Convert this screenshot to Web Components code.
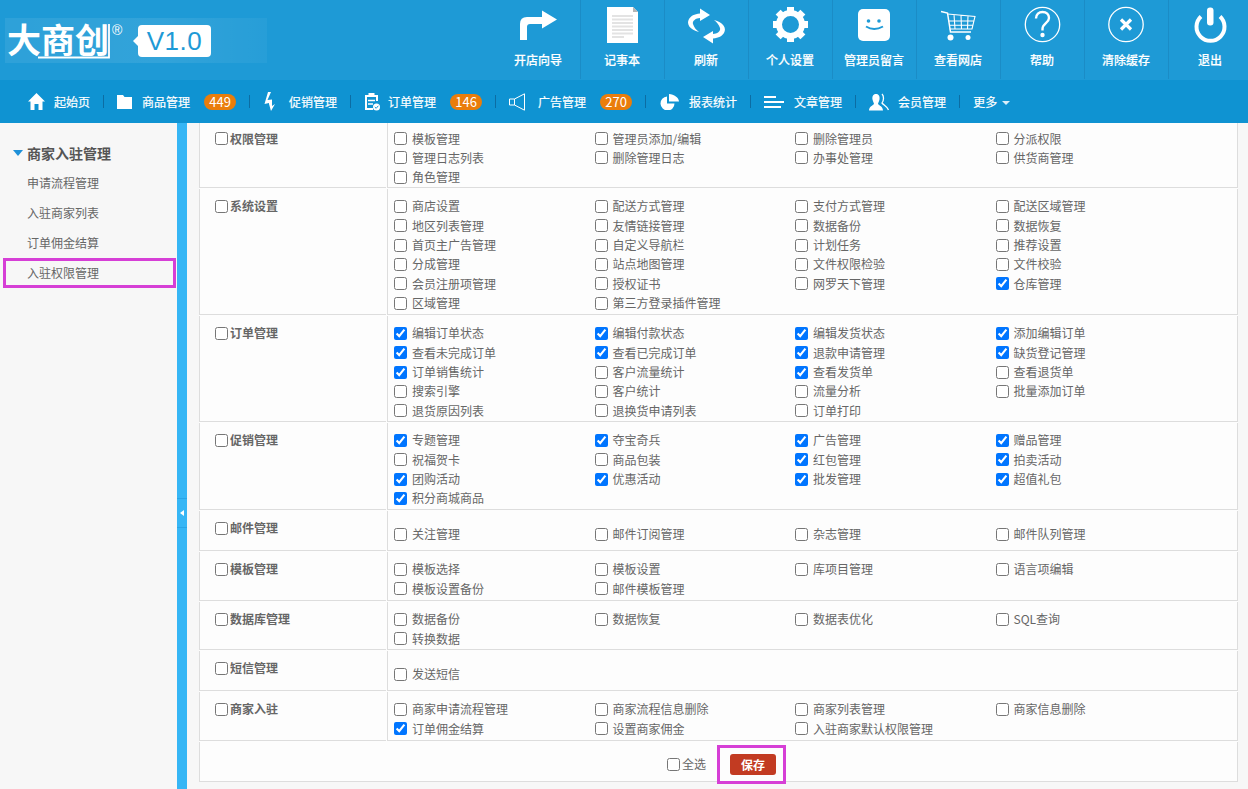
<!DOCTYPE html>
<html lang="zh-CN"><head><meta charset="utf-8"><title>入驻权限管理</title>
<style>
html,body{margin:0;padding:0;height:100%;overflow:hidden}
body{font-family:"Noto Sans CJK SC","Liberation Sans",sans-serif;font-size:12px;color:#666;background:#f7f7f7}
</style></head><body>
<app-page>
  <app-header>
    <brand-logo></brand-logo>
    <tool-btn label="开店向导"><svg width="84" height="50" viewBox="496 0 84 50"><path fill="#fff" d="M520 40V24Q520 17 527 17H542V10.5L557 19.5 542 28.5V24H530Q527 24 527 27V40Z"/></svg></tool-btn>
    <tool-btn label="记事本"><svg width="84" height="50" viewBox="580 0 84 50"><path fill="#fff" d="M607 7H633L638 12V43H607Z"/><path fill="#b5b5b5" d="M633 7L638 12H633Z"/><path stroke="#e3e3e3" stroke-width="2" d="M612 16H633M612 19.5H633M612 23H633M612 26.5H633M612 30H633M612 33.5H633M612 37H624"/></svg></tool-btn>
    <tool-btn label="刷新"><svg width="84" height="50" viewBox="664 0 84 50"><g fill="#fff"><path id="a" d="M699 32C690 30 686 24 689 19 691 16 694 14 700 13.5V8.5L710 15 700 21V18C696 18 692 21 693 24 694 27 696 30 699 32Z"/><path transform="rotate(180 706.5 26)" d="M699 32C690 30 686 24 689 19 691 16 694 14 700 13.5V8.5L710 15 700 21V18C696 18 692 21 693 24 694 27 696 30 699 32Z"/></g></svg></tool-btn>
    <tool-btn label="个人设置"><svg width="84" height="50" viewBox="748 0 84 50"><g fill="#fff"><g id="t"><rect x="787" y="7" width="7" height="35"/><rect x="787" y="7" width="7" height="35" transform="rotate(45 790.5 24.5)"/><rect x="787" y="7" width="7" height="35" transform="rotate(90 790.5 24.5)"/><rect x="787" y="7" width="7" height="35" transform="rotate(135 790.5 24.5)"/></g></g><circle cx="790.5" cy="24.5" r="11.5" fill="#1e9ad6" stroke="#fff" stroke-width="6"/></svg></tool-btn>
    <tool-btn label="管理员留言"><svg width="84" height="50" viewBox="832 0 84 50"><rect x="858" y="9" width="32" height="32" rx="5" fill="#fff"/><circle cx="868.5" cy="21" r="1.8" fill="#1e9ad6"/><circle cx="879" cy="21" r="1.8" fill="#1e9ad6"/><path d="M866 26.5Q874 31.5 883 26.5" fill="none" stroke="#1e9ad6" stroke-width="2"/></svg></tool-btn>
    <tool-btn label="查看网店"><svg width="84" height="50" viewBox="916 0 84 50"><g fill="none" stroke="#fff"><path stroke-width="1.5" d="M941 11.5L947.5 13 950.5 32H971"/><path stroke-width="1.1" d="M947.5 14L975 16.5 972 29 949.5 29M948.8 21H974M950 25.3H973M954 14.5L955 29M961 15L961.5 29M968 15.7L967.5 29"/></g><circle cx="950.5" cy="37.5" r="3" fill="#fff"/><circle cx="968" cy="37.5" r="2.5" fill="#fff"/></svg></tool-btn>
    <tool-btn label="帮助"><svg width="84" height="50" viewBox="1000 0 84 50"><circle cx="1042.5" cy="24.5" r="17.2" fill="none" stroke="#fff" stroke-width="1.3"/><path d="M1036 18.5C1036 14 1039 12 1042.5 12 1046.5 12 1049 14.5 1049 18 1049 23 1042.500 23.500 1042.500 29V30.500" fill="none" stroke="#fff" stroke-width="2.400"/><circle cx="1042.500" cy="35" r="2.200" fill="#fff"/></svg></tool-btn>
    <tool-btn label="清除缓存"><svg width="84" height="50" viewBox="1084 0 84 50"><circle cx="1126" cy="24.500" r="17.200" fill="none" stroke="#fff" stroke-width="1.300"/><path d="M1121 19.500L1131 29.500M1131 19.500L1121 29.500" stroke="#fff" stroke-width="3.200"/></svg></tool-btn>
    <tool-btn label="退出"><svg width="84" height="50" viewBox="1168 0 84 50"><path d="M1201 16.500A14 14 0 1 0 1220 16.500" fill="none" stroke="#fff" stroke-width="4"/><rect x="1207" y="7.500" width="6.500" height="18" rx="3" fill="#fff"/></svg></tool-btn>
  </app-header>
  <main-nav>
    <nav-item w="17" g="9" sep><svg slot="icon" width="17" height="17" viewBox="0 0 17 17"><path fill="#fff" d="M8.500 0L17 8.500H14.500V17H10.500V11H6.500V17H2.500V8.500H0Z"/></svg>起始页</nav-item>
    <nav-item w="15" g="10" badge="449" sep><svg slot="icon" width="15" height="14" viewBox="0 0 15 14"><path fill="#fff" d="M0 0H6L7.500 2H15V14H0Z"/></svg>商品管理</nav-item>
    <nav-item w="16" g="10" sep><svg slot="icon" width="14" height="19" viewBox="0 0 14 19"><path fill="#fff" d="M5 0H8L4.500 8 9 7.500 9 14 12 12 8 19 6 12V11L1.500 12Z"/></svg>促销管理</nav-item>
    <nav-item w="16" g="8" badge="146" sep><svg slot="icon" width="16" height="19" viewBox="0 0 16 19"><path fill="none" stroke="#fff" stroke-width="2" d="M9 17H2V4H13V9"/><rect x="4.500" y="1" width="6" height="4" fill="#fff"/><path stroke="#fff" stroke-width="1.500" d="M4 8.500H11M4 12H9"/><circle cx="12.500" cy="15" r="3.500" fill="#fff"/><path d="M10.800 15L12.200 16.300 14.300 13.800" fill="none" stroke="#0f93d2" stroke-width="1"/></svg>订单管理</nav-item>
    <nav-item w="17" g="12" badge="270" sep><svg slot="icon" width="17" height="18" viewBox="0 0 17 18"><path fill="none" stroke="#fff" stroke-width="1" d="M.5 6H5.500L15.500 .8V17.200L5.500 12H.5ZM5.500 6V12"/></svg>广告管理</nav-item>
    <nav-item w="20" g="10" sep><svg slot="icon" width="20" height="16" viewBox="0 0 20 16"><path fill="#fff" d="M8 2.500A7 7 0 1 0 15.500 9.500H8Z M10 0L10 7.500H20C20 4 15 0 10 0Z" /></svg>报表统计</nav-item>
    <nav-item w="20" g="10" sep><svg slot="icon" width="20" height="12" viewBox="0 0 20 12"><path stroke="#fff" stroke-width="2" d="M0 1H12M0 6H20M0 11H17"/></svg>文章管理</nav-item>
    <nav-item w="20" g="9" sep><svg slot="icon" width="20" height="18" viewBox="0 0 20 18"><path fill="#fff" d="M7 1C10 1 11 3.500 10.500 6.500 10 9 9 10 9 11 10 12.500 14 13.500 14 17.500H0C0 13.500 4 12.500 5 11 5 10 4 9 3.500 6.500 3 3.500 4 1 7 1Z"/><path fill="none" stroke="#fff" stroke-width="1.300" d="M13 1C15 3 15 7 13 10 14.500 12 18 13 19.500 17"/></svg>会员管理</nav-item>
    <nav-item w="0" g="0" caret>更多</nav-item>
  </main-nav>
  <app-body>
    <side-menu>
      <side-group>商家入驻管理</side-group>
      <side-item>申请流程管理</side-item>
      <side-item>入驻商家列表</side-item>
      <side-item>订单佣金结算</side-item>
      <side-item active>入驻权限管理</side-item>
    </side-menu>
    <split-bar></split-bar>
    <perm-table>
      <perm-row name="权限管理" h="65" pt="5.500" tpt="5.500"><perm-item>模板管理</perm-item><perm-item>管理员添加/编辑</perm-item><perm-item>删除管理员</perm-item><perm-item>分派权限</perm-item><perm-item>管理日志列表</perm-item><perm-item>删除管理日志</perm-item><perm-item>办事处管理</perm-item><perm-item>供货商管理</perm-item><perm-item>角色管理</perm-item></perm-row>
      <perm-row name="系统设置" h="126"><perm-item>商店设置</perm-item><perm-item>配送方式管理</perm-item><perm-item>支付方式管理</perm-item><perm-item>配送区域管理</perm-item><perm-item>地区列表管理</perm-item><perm-item>友情链接管理</perm-item><perm-item>数据备份</perm-item><perm-item>数据恢复</perm-item><perm-item>首页主广告管理</perm-item><perm-item>自定义导航栏</perm-item><perm-item>计划任务</perm-item><perm-item>推荐设置</perm-item><perm-item>分成管理</perm-item><perm-item>站点地图管理</perm-item><perm-item>文件权限检验</perm-item><perm-item>文件校验</perm-item><perm-item>会员注册项管理</perm-item><perm-item>授权证书</perm-item><perm-item>网罗天下管理</perm-item><perm-item checked>仓库管理</perm-item><perm-item>区域管理</perm-item><perm-item>第三方登录插件管理</perm-item></perm-row>
      <perm-row name="订单管理" h="106"><perm-item checked>编辑订单状态</perm-item><perm-item checked>编辑付款状态</perm-item><perm-item checked>编辑发货状态</perm-item><perm-item checked>添加编辑订单</perm-item><perm-item checked>查看未完成订单</perm-item><perm-item checked>查看已完成订单</perm-item><perm-item checked>退款申请管理</perm-item><perm-item checked>缺货登记管理</perm-item><perm-item checked>订单销售统计</perm-item><perm-item>客户流量统计</perm-item><perm-item checked>查看发货单</perm-item><perm-item>查看退货单</perm-item><perm-item>搜索引擎</perm-item><perm-item>客户统计</perm-item><perm-item>流量分析</perm-item><perm-item>批量添加订单</perm-item><perm-item>退货原因列表</perm-item><perm-item>退换货申请列表</perm-item><perm-item>订单打印</perm-item></perm-row>
      <perm-row name="促销管理" h="87"><perm-item checked>专题管理</perm-item><perm-item checked>夺宝奇兵</perm-item><perm-item checked>广告管理</perm-item><perm-item checked>赠品管理</perm-item><perm-item>祝福贺卡</perm-item><perm-item>商品包装</perm-item><perm-item checked>红包管理</perm-item><perm-item checked>拍卖活动</perm-item><perm-item checked>团购活动</perm-item><perm-item checked>优惠活动</perm-item><perm-item checked>批发管理</perm-item><perm-item checked>超值礼包</perm-item><perm-item checked>积分商城商品</perm-item></perm-row>
      <perm-row name="邮件管理" h="40" pt="13.300"><perm-item>关注管理</perm-item><perm-item>邮件订阅管理</perm-item><perm-item>杂志管理</perm-item><perm-item>邮件队列管理</perm-item></perm-row>
      <perm-row name="模板管理" h="49"><perm-item>模板选择</perm-item><perm-item>模板设置</perm-item><perm-item>库项目管理</perm-item><perm-item>语言项编辑</perm-item><perm-item>模板设置备份</perm-item><perm-item>邮件模板管理</perm-item></perm-row>
      <perm-row name="数据库管理" h="48"><perm-item>数据备份</perm-item><perm-item>数据恢复</perm-item><perm-item>数据表优化</perm-item><perm-item>SQL查询</perm-item><perm-item>转换数据</perm-item></perm-row>
      <perm-row name="短信管理" h="40" pt="13.300"><perm-item>发送短信</perm-item></perm-row>
      <perm-row name="商家入驻" h="49"><perm-item>商家申请流程管理</perm-item><perm-item>商家流程信息删除</perm-item><perm-item>商家列表管理</perm-item><perm-item>商家信息删除</perm-item><perm-item checked>订单佣金结算</perm-item><perm-item>设置商家佣金</perm-item><perm-item>入驻商家默认权限管理</perm-item></perm-row>
      <save-bar></save-bar>
    </perm-table>
  </app-body>
</app-page>
<script>
function def(name, html, init){
  customElements.define(name, class extends HTMLElement{
    constructor(){super();this.attachShadow({mode:'open'}).innerHTML=html;}
    connectedCallback(){if(init)init(this,this.shadowRoot);}
  });
}
def('app-page',`<style>:host{display:flex;flex-direction:column;height:789px;overflow:hidden}</style><slot></slot>`);
def('app-header',`<style>:host{display:flex;height:80px;background:#1e9ad6;overflow:hidden;flex:none}</style><slot></slot>`);
def('brand-logo',`<style>
:host{display:block;flex:none;width:496px;box-sizing:border-box;padding:18px 0 0 5px}
.band{display:flex;align-items:flex-start;width:262px;height:45px;background:linear-gradient(90deg,rgba(255,255,255,.07),rgba(255,255,255,.09) 60%,rgba(255,255,255,.04));position:relative}
.name{font:700 34px/34px "Noto Sans CJK SC",sans-serif;color:#fff;margin:4px 0 0 2px;letter-spacing:0;white-space:nowrap}
.reg{font:14px/14px "Liberation Sans",sans-serif;color:#fff;margin:5px 0 0 3px;width:16px}
svg.u{position:absolute;left:30px;top:0}
.ver{position:relative;margin:7px 0 0 10px;width:73px;height:32px;background:#fff;border-radius:4px;color:#1e9ad6;font:26px/32px "Liberation Sans",sans-serif;text-align:center;letter-spacing:.5px}
.ver::before{content:"";position:absolute;left:-5px;top:11px;border:5px solid transparent;border-left:0;border-right-color:#fff}
</style><div class="band"><span class="name">大商创</span><span class="reg">®</span><span class="ver">V1.0</span><svg class="u" width="80" height="45"><path d="M3 39.500H74V6" fill="none" stroke="#fff" stroke-width="1.800"/></svg></div>`);
def('tool-btn',`<style>
:host{display:flex;flex-direction:column;align-items:center;flex:none;width:84px;height:79px;box-sizing:border-box;position:relative}
:host(:not(:last-child))::after{content:"";position:absolute;right:-1px;top:0;bottom:0;width:1px;background:#1b8cc6}
.i{height:50px;line-height:0}
.l{color:#fff;font-size:12px;line-height:20px;font-weight:500;-webkit-text-stroke:.15px #fff}
</style><div class="i"><slot></slot></div><div class="l"></div>`,(e,s)=>{s.querySelector('.l').textContent=e.getAttribute('label')});
def('main-nav',`<style>:host{display:flex;align-items:center;height:43px;padding-left:15px;background:#0f93d2;flex:none;color:#fff}</style><slot></slot>`);
def('nav-item',`<style>
:host{display:flex;align-items:center;flex:none;height:43px;color:#fff;font-size:12px;-webkit-text-stroke:.2px #fff}
.p{display:flex;align-items:center;padding:0 13px}
.ic{display:flex;align-items:center;justify-content:flex-start;line-height:0}
.b{display:inline-block;width:32px;height:16px;margin-left:14px;background:#ea7d0b;border-radius:8px;font-size:13px;line-height:16px;text-align:center;-webkit-text-stroke:0}
.s{display:block;width:1px;height:13px;background:#0c6da3}
.c{display:inline-block;margin-left:5px;margin-top:2px;border:4px solid transparent;border-bottom:0;border-top-color:#d9eef9}
</style><div class="p"><span class="ic"><slot name="icon"></slot></span><slot></slot></div><span class="s"></span>`,(e,s)=>{
  const ic=s.querySelector('.ic'),p=s.querySelector('.p');
  ic.style.width=e.getAttribute('w')+'px';ic.style.marginRight=e.getAttribute('g')+'px';
  if(e.hasAttribute('badge')){const b=document.createElement('span');b.className='b';b.textContent=e.getAttribute('badge');p.appendChild(b);}
  if(e.hasAttribute('caret')){const c=document.createElement('span');c.className='c';p.appendChild(c);}
  if(!e.hasAttribute('sep'))s.querySelector('.s').remove();
});
def('app-body',`<style>:host{display:flex;flex:1;min-height:0}</style><slot></slot>`);
def('side-menu',`<style>:host{display:block;flex:none;width:177px;box-sizing:border-box;padding-top:15px;background:#f7f7f7}</style><slot></slot>`);
def('side-group',`<style>
:host{display:flex;align-items:center;height:30px;padding-left:13px;font-size:14px;font-weight:700;color:#555}
i{width:0;height:0;border:5px solid transparent;border-bottom:0;border-top:6px solid #1e90d8;margin-right:4px}
</style><i></i><slot></slot>`);
def('side-item',`<style>
:host{display:block;height:30px;line-height:30px;padding-left:27px;font-size:12px;color:#666;position:relative}
:host([active])::after{content:"";position:absolute;left:3px;right:1px;top:0;bottom:0;border:3px solid #d63fd6;box-sizing:border-box}
</style><slot></slot>`);
def('split-bar',`<style>
:host{display:block;flex:none;width:10px;background:#36b6f5;padding-top:375px;box-sizing:border-box}
div{height:30px;border:1px solid #2aa5e6;border-left:0;border-right:0;display:flex;align-items:center;justify-content:center;box-sizing:border-box}
i{border:3.500px solid transparent;border-left:0;border-right:4px solid #fff}
</style><div><i></i></div>`);
def('perm-table',`<style>:host{display:flex;flex-direction:column;gap:1px;flex:none;width:1039px;margin-left:12px;background:#fdfdfd;align-self:flex-start}</style><slot></slot>`);
def('perm-row',`<style>
:host{display:grid;grid-template-columns:187px 1fr;column-gap:1px;flex:none}
.t,.c{box-sizing:border-box;border-bottom:1px solid #ddd;border-left:1px solid #ddd}
.t{padding:7.300px 0 0 15px;display:flex;align-items:flex-start;font-weight:700;line-height:19.330px}
.t input{margin:3.500px 2px 0 0;width:13px;height:13px;flex:none}
.c{display:grid;grid-template-columns:repeat(4,200.500px);grid-auto-rows:19.330px;align-content:start;padding:7.300px 0 0 6px;border-right:1px solid #ddd}
</style><div class="t"><input type="checkbox"><span></span></div><div class="c"><slot></slot></div>`,(e,s)=>{
  s.querySelector('.t span').textContent=e.getAttribute('name');
  e.style.height=e.getAttribute('h')+'px';
  if(e.hasAttribute('pt'))s.querySelector('.c').style.paddingTop=e.getAttribute('pt')+'px';
  if(e.hasAttribute('tpt'))s.querySelector('.t').style.paddingTop=e.getAttribute('tpt')+'px';
});
def('perm-item',`<style>
:host{display:flex;align-items:center;height:19.330px;white-space:nowrap;font-size:12px;color:#666}
input{margin:1px 5px 0 0;width:13px;height:13px;flex:none}
</style><input type="checkbox"><slot></slot>`,(e,s)=>{s.querySelector('input').checked=e.hasAttribute('checked')});
def('save-bar',`<style>
:host{display:flex;align-items:flex-start;justify-content:center;height:40px;box-sizing:border-box;border:1px solid #ddd;border-top:0;padding:12px 0 0 6px;font-size:12px;color:#666}
input{margin:4px 2px 0 0;width:13px;height:13px}
span{line-height:20px}
button{position:relative;margin:0 0 0 24px;width:46px;height:21px;padding:0;border:0;border-radius:3px;background:#c23b22;color:#fff;font:700 12px/21px "Noto Sans CJK SC",sans-serif}
button::after{content:"";position:absolute;left:-13px;right:-10px;top:-9px;bottom:-9px;border:3px solid #d63fd6;box-sizing:border-box}
</style><input type="checkbox"><span>全选</span><button>保存</button>`);
</script>
</body></html>
